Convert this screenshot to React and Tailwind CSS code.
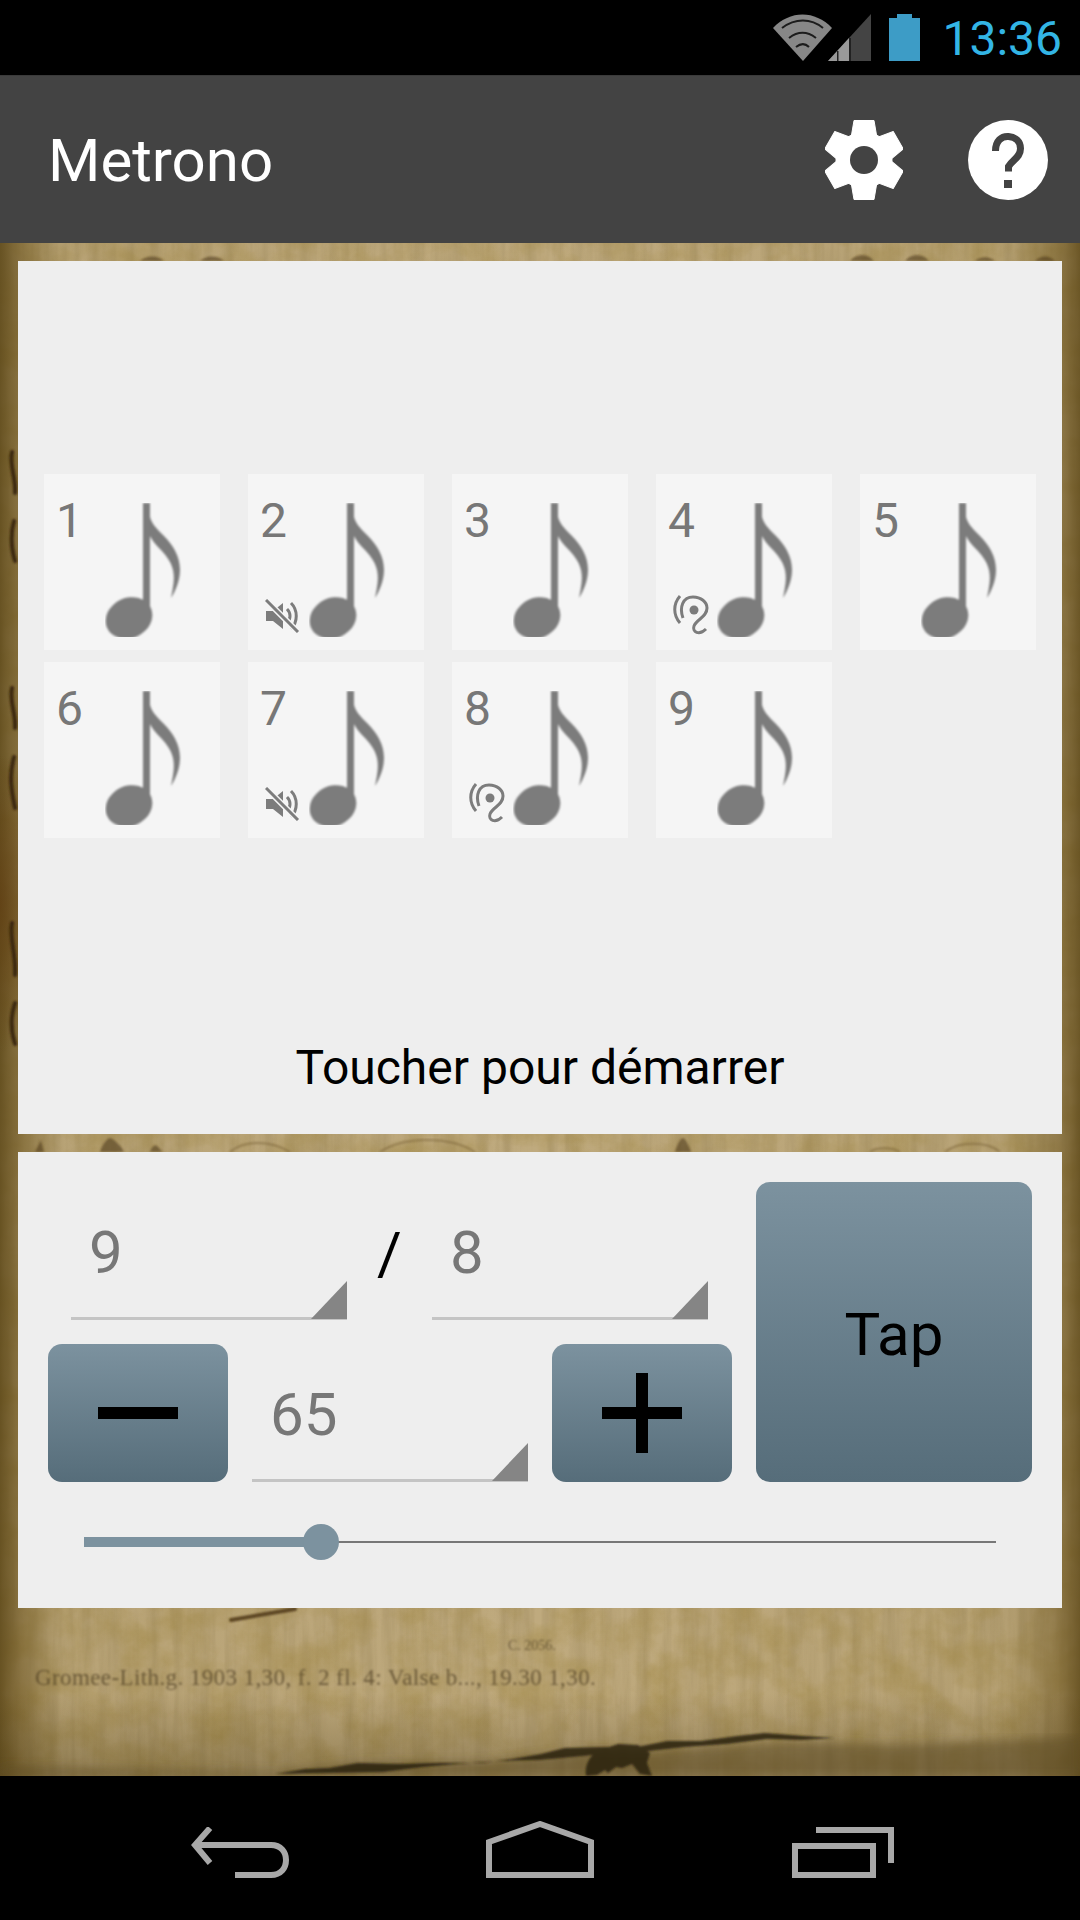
const cells = [
  { n: 1 }, { n: 2, mark: "mute" }, { n: 3 }, { n: 4, mark: "ear" }, { n: 5 },
  { n: 6 }, { n: 7, mark: "mute" }, { n: 8, mark: "ear" }, { n: 9 },
];

// old sheet music paper, only the strips around the panels are visible
function PaperTexture() {
  return (
    <svg className="absolute inset-0 w-full h-full" viewBox="0 0 1080 1533" preserveAspectRatio="none">
      <defs>
        <filter id="streaks" x="0" y="0" width="100%" height="100%">
          <feTurbulence type="fractalNoise" baseFrequency="0.08 0.007" numOctaves="4" seed="5" />
          <feColorMatrix values="0 0 0 0 0.30  0 0 0 0 0.22  0 0 0 0 0.09  1.5 0 0 0 -0.5" />
        </filter>
        <filter id="blotch" x="0" y="0" width="100%" height="100%">
          <feTurbulence type="fractalNoise" baseFrequency="0.025 0.03" numOctaves="5" seed="12" />
          <feColorMatrix values="0 0 0 0 0.36  0 0 0 0 0.25  0 0 0 0 0.06  0 1.8 0 0 -0.62" />
        </filter>
        <linearGradient id="edges" x1="0" x2="1" y1="0" y2="0">
          <stop offset="0" stopColor="#5a4515" stopOpacity="0.85" />
          <stop offset="0.02" stopColor="#6b5420" stopOpacity="0.6" />
          <stop offset="0.06" stopColor="#7a6530" stopOpacity="0.1" />
          <stop offset="0.5" stopColor="#7a6530" stopOpacity="0" />
          <stop offset="0.93" stopColor="#7a6530" stopOpacity="0.1" />
          <stop offset="0.98" stopColor="#6b5420" stopOpacity="0.55" />
          <stop offset="1" stopColor="#5a4515" stopOpacity="0.8" />
        </linearGradient>
        <linearGradient id="foot" x1="0" x2="0" y1="0" y2="1">
          <stop offset="0" stopColor="#4a3a14" stopOpacity="0" />
          <stop offset="1" stopColor="#4a3a14" stopOpacity="0.35" />
        </linearGradient>
        <radialGradient id="burn">
          <stop offset="0" stopColor="#5f3c10" stopOpacity="0.7" />
          <stop offset="1" stopColor="#5f3c10" stopOpacity="0" />
        </radialGradient>
        <filter id="soft"><feGaussianBlur stdDeviation="0.9" /></filter>
        <filter id="wide"><feGaussianBlur stdDeviation="5" /></filter>
      </defs>
      <rect width="1080" height="1533" fill="#bfaa7e" />
      <rect width="1080" height="1533" filter="url(#streaks)" opacity="0.5" />
      <rect width="1080" height="1533" filter="url(#blotch)" opacity="0.6" />
      <rect width="1080" height="1533" fill="url(#edges)" />
      <ellipse cx="0" cy="660" rx="40" ry="150" fill="url(#burn)" />
      <rect y="1450" width="1080" height="83" fill="url(#foot)" />
      <path d="M0 1524L275 1529 358 1520 482 1519 585 1507 661 1507 792 1499 895 1502 1080 1494V1533H0z" fill="#5f4e28" opacity="0.55" filter="url(#wide)" />
      <g filter="url(#soft)" fill="none" stroke="#3a260c" strokeWidth="4" strokeLinecap="round">
        <path d="M12 209c-3 14 4 24 3 41M14 278c-4 14-3 26 1 40M12 445c-3 14 4 24 3 40M14 514c-5 18-3 32 1 51M12 680c-3 16 4 28 3 52M15 760c-5 14-4 28 0 41" />
        <path d="M231 1377l64-11" stroke="#5c4520" />
      </g>
      <g filter="url(#soft)" fill="#2b2210" opacity="0.85">
        <path d="M275 1531l30-5 24-1 29-5 40 1 40-1 44 0 30-4 29-5 24-6 40-1 32 0 30-6 34 0 36-5 28-3 40 3 30 2-34 2-34-1-40 5-42 3-36 4-26 1-40 4-44 4-40 1-42 3-34 3-40 5z" />
        <path d="M586 1533c-2-10 4-22 14-26l18-6 20 1 12 8-3 10 5 13-12-2-8-10-10 4-6-1-8 6-3-3-8 5z" />
      </g>
      <g filter="url(#soft)" fill="#4a3413" opacity="0.55">
        <path d="M140 18c6-6 18-6 24 0zM200 18c6-6 18-6 24 0zM850 18c6-8 18-8 24 0zM905 18c6-8 18-8 24 0zM975 18c6-5 14-5 20 0zM1035 18c6-6 14-6 20 0z" />
        <path d="M35 909l6-12 3 12zM100 909c2-8 8-14 10-14s12 8 14 14zM150 909c3-8 6-8 9-4s4 4 4 4z" />
        <path d="M675 909c2-8 6-14 8-14s6 8 8 14z" />
      </g>
      <g filter="url(#soft)" fill="none" stroke="#6b5228" strokeWidth="2" opacity="0.45">
        <path d="M230 909c14-12 40-12 60 0M380 909c24-16 70-16 95 0M870 909c6-5 22-5 30 0M945 909c14-11 42-11 55 0" />
      </g>
    </svg>
  );
}

function Note() {
  return (
    <svg className="w-[88px] h-[134px]" viewBox="0 0 88 134">
      <defs>
        <filter id="noteBlur" x="-10%" y="-10%" width="120%" height="120%"><feGaussianBlur stdDeviation="1.1" /></filter>
      </defs>
      <g fill="#7c7c7c" filter="url(#noteBlur)">
        <ellipse cx="24" cy="115" rx="24" ry="20" transform="rotate(-25 24 115)" />
        <rect x="38" y="0" width="7" height="116" />
        <path d="M45 14c2 7 6 11 13 18 10 10 17 21 17 35 0 10-4 20-9 28 2-10 4-19 2-28-2-9-8-16-14-22-4-4-7-8-9-12z" />
      </g>
    </svg>
  );
}

function MuteIcon() {
  return (
    <svg className="w-[36px] h-[34px]" viewBox="0 0 36 34">
      <path d="M1 12h7l10 -8v26l-10-8h-7z" fill="#7c7c7c" />
      <path d="M22 10c4 4 4 10 0 14M26 4c7 7 7 19 0 26" fill="none" stroke="#7c7c7c" strokeWidth="3" />
      <path d="M1 1l32 32" stroke="#f5f5f5" strokeWidth="6" />
      <path d="M1 1l32 32" stroke="#7c7c7c" strokeWidth="3" />
    </svg>
  );
}

function EarIcon() {
  return (
    <svg className="w-[36px] h-[41px]" viewBox="0 0 36 41" fill="none" stroke="#7c7c7c" strokeWidth="3">
      <path d="M7 1C0 9 0 20 7 28" />
      <path d="M10 23C6 12 10 2 20 2c8 0 14 5 14 11 0 9-10 11-13 18-2 6 5 10 12 3" />
      <circle cx="21" cy="15" r="4.5" fill="#7c7c7c" stroke="none" />
    </svg>
  );
}

function BeatCell({ n, mark }) {
  return (
    <div className="relative w-[176px] h-[176px] bg-[#f5f5f5]">
      <span className="absolute left-[12px] top-[19px] text-[48px] leading-[56px] text-[#777777]">{n}</span>
      <div className="absolute left-[61px] top-[29px]"><Note /></div>
      {mark === "mute" && <div className="absolute left-[17px] top-[125px]"><MuteIcon /></div>}
      {mark === "ear" && <div className="absolute left-[17px] top-[121px]"><EarIcon /></div>}
    </div>
  );
}

function Spinner({ value, className }) {
  return (
    <div className={"relative h-[112px] border-b-[3px] border-[#c4c4c4] " + className}>
      <span className="absolute left-[18px] top-[10px] text-[60px] leading-[70px] text-[#777777]">{value}</span>
      <div className="absolute right-0 bottom-[-2px] w-[36px] h-[38px] bg-[#858585] [clip-path:polygon(100%_0,100%_100%,0_100%)]" />
    </div>
  );
}

function GradButton({ className, children }) {
  return (
    <div className={"flex items-center justify-center rounded-[14px] bg-gradient-to-b from-[#7c929f] to-[#566d7a] " + className}>
      {children}
    </div>
  );
}

function Gear() {
  return (
    <svg className="w-[78px] h-[80px] mr-[65px]" viewBox="0 0 78 80">
      <g fill="#ffffff" stroke="#ffffff" strokeWidth="1" strokeLinejoin="round">
        <circle cx="39" cy="40" r="28" />
        {[0, 60, 120, 180, 240, 300].map((a) => (
          <polygon key={a} points="-10,-39.5 10,-39.5 13,-22 -13,-22" transform={`translate(39 40) rotate(${a})`} />
        ))}
      </g>
      <circle cx="39" cy="40" r="14" fill="#434343" />
    </svg>
  );
}

export default function App() {
  return (
    <div className="w-[1080px] h-[1920px] flex flex-col bg-black font-['Roboto',sans-serif]">
      <div className="h-[75px] flex items-center justify-end pr-[18px] bg-black">
        <svg className="w-[98px] h-[47px] mr-[18px] mt-[-1px]" viewBox="0 0 98 47">
          <path d="M30 47L0 14C17-4 42-4 59 14z" fill="#878787" />
          <path d="M9 14c13-10 29-10 41 0M16 24c9-7 18-7 27 0M23 33c5-4 9-4 13 0" fill="none" stroke="#1c1c1c" strokeWidth="2" />
          <path d="M55 47L98 0v47z" fill="#444444" />
          <path d="M55 47l21-23v23z" fill="#9a9a9a" />
          <path d="M76 47V24h2v23zM64 47V37h1.500v10z" fill="#222222" />
        </svg>
        <svg className="w-[31px] h-[47px] mr-[22px] mt-[-1px]" viewBox="0 0 31 47">
          <path d="M8 0h15v4h8v43H0V4h8z" fill="#3d9cc6" />
        </svg>
        <span className="text-[48px] leading-none text-[#33b5e5] font-normal mt-[3px]">13:36</span>
      </div>

      <div className="h-[168px] flex items-center bg-[#434343] border-t border-[#3a3a3a]">
        <span className="ml-[48px] mt-[3px] flex-1 text-[60px] leading-none text-white">Metrono</span>
        <Gear />
        <svg className="w-[80px] h-[80px] mr-[32px]" viewBox="0 0 80 80">
          <circle cx="40" cy="40" r="40" fill="#ffffff" />
          <path d="M27.500 31c0-10 6-15 13-14.500 7 .5 12 5 12 12 0 9-8 11-12 18v5" fill="none" stroke="#434343" strokeWidth="7" />
          <rect x="36" y="60" width="8" height="8" fill="#434343" />
        </svg>
      </div>

      <main className="relative flex-1 overflow-hidden flex flex-col px-[18px] pt-[18px]">
        <PaperTexture />
        <section className="relative h-[873px] bg-[#eeeeee] flex flex-col px-[26px]">
          <div className="flex flex-wrap gap-x-[28px] gap-y-[12px] pt-[213px]">
            {cells.map((c) => <BeatCell key={c.n} {...c} />)}
          </div>
          <p className="mt-[202px] text-center text-[48px] leading-[56px] text-black">Toucher pour démarrer</p>
        </section>

        <section className="relative mt-[18px] h-[456px] bg-[#eeeeee] pl-[30px] pr-[30px] pt-[30px]">
          <div className="flex gap-[24px]">
            <div className="w-[684px]">
              <div className="h-[138px] flex items-end pl-[23px]">
                <Spinner value="9" className="w-[276px]" />
                <span className="w-[85px] self-start mt-[37px] text-center text-[60px] leading-[70px] text-black">/</span>
                <Spinner value="8" className="w-[276px]" />
              </div>
              <div className="flex items-end mt-[24px]">
                <GradButton className="w-[180px] h-[138px]">
                  <div className="w-[80px] h-[12px] bg-black" />
                </GradButton>
                <Spinner value="65" className="w-[276px] ml-[24px]" />
                <GradButton className="relative w-[180px] h-[138px] ml-[24px]">
                  <div className="w-[80px] h-[12px] bg-black" />
                  <div className="absolute w-[12px] h-[80px] bg-black" />
                </GradButton>
              </div>
            </div>
            <GradButton className="w-[276px] h-[300px] pt-[6px]">
              <span className="text-[60px] leading-none text-black">Tap</span>
            </GradButton>
          </div>
          <div className="relative mt-[42px] ml-[36px] w-[912px] h-[36px] flex items-center">
            <div className="w-[236px] h-[10px] bg-[#7c929f]" />
            <div className="flex-1 h-[2px] bg-[#777777]" />
            <div className="absolute left-[219px] w-[36px] h-[36px] rounded-full bg-[#7c929f]" />
          </div>
        </section>

        <p className="relative mt-[31px] ml-[490px] text-[14px] leading-none text-[#4d3d22]/70 font-['Liberation_Serif',serif] blur-[0.8px]">C. 2056.</p>
        <p className="relative mt-[13px] ml-[17px] text-[23px] leading-none tracking-[0.4px] text-[#4d3d22]/70 font-['Liberation_Serif',serif] blur-[0.8px]">Gromee-Lith.g. 1903 1,30, f. 2 fl. 4: Valse b..., 19.30 1,30.</p>
      </main>

      <nav className="h-[144px] flex items-start pt-[45px] pl-[191px] bg-black">
        <svg className="w-[98px] h-[51px] mt-[6px] mr-[197px]" viewBox="0 0 98 51" fill="none" stroke="#a8a8a8" strokeWidth="6">
          <path d="M19 1L4 18l15 18M4 18h76c10 0 15 7 15 15s-5 15-15 15H44" />
        </svg>
        <svg className="w-[108px] h-[57px] mr-[198px]" viewBox="0 0 108 57" fill="none" stroke="#a8a8a8" strokeWidth="6">
          <path d="M3 54V21L54 3l51 18v33z" />
        </svg>
        <svg className="w-[102px] h-[51px] mt-[6px]" viewBox="0 0 102 51" fill="none" stroke="#a8a8a8" strokeWidth="6">
          <path d="M3 19h78v29H3z" />
          <path d="M24 3h75v33" />
        </svg>
      </nav>
    </div>
  );
}
